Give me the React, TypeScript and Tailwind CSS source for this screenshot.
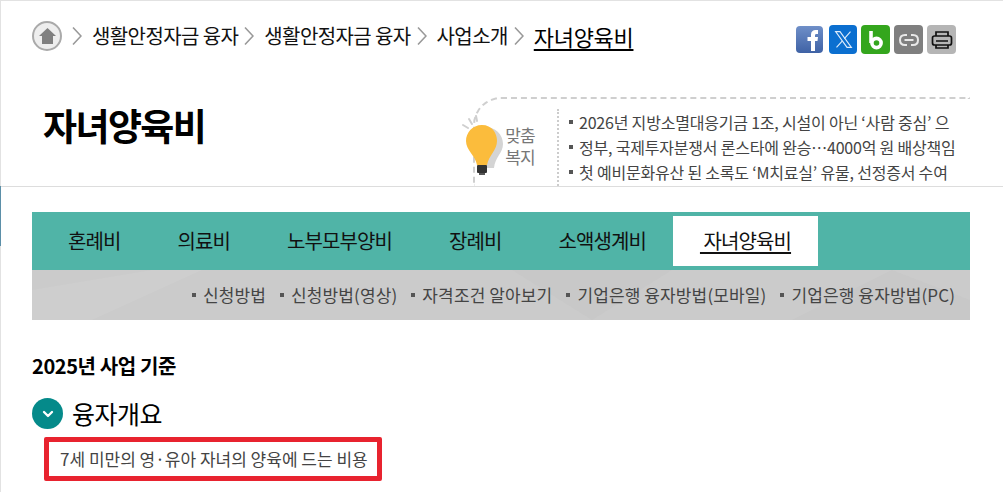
import { ChevronDown } from 'lucide-react';

const crumbs = ['생활안정자금 융자', '생활안정자금 융자', '사업소개'];
const news = [
  '2026년 지방소멸대응기금 1조, 시설이 아닌 ‘사람 중심’ 으',
  '정부, 국제투자분쟁서 론스타에 완승…4000억 원 배상책임',
  '첫 예비문화유산 된 소록도 ‘M치료실’ 유물, 선정증서 수여',
];
const tabs = ['혼례비', '의료비', '노부모부양비', '장례비', '소액생계비'];
const subs = ['신청방법', '신청방법(영상)', '자격조건 알아보기', '기업은행 융자방법(모바일)', '기업은행 융자방법(PC)'];

function Chevron() {
  return (
    <svg width="10" height="20" viewBox="0 0 10 20" fill="none" stroke="#999" strokeWidth="1.6" className="shrink-0 ml-[6px] mr-[10px]">
      <path d="M1 1.5 L9 10 L1 18.5" />
    </svg>
  );
}

function Bulb() {
  return (
    <svg width="46" height="62" viewBox="0 0 46 62" className="shrink-0">
      <g stroke="#cfcfcf" strokeWidth="2" strokeLinecap="round">
        <path d="M2 10 L7 13" />
        <path d="M8 4 L11 9" />
        <path d="M15 1 L16 6" />
      </g>
      <path d="M24 12 C34 12 42 19 42 29 C42 38 34 42 33 53 L24 53 Z" fill="#d4d4d4" />
      <path d="M21 10 C11 10 5 18 5 26 C5 35 14 40 16 50 L26 50 C28 40 36 35 36 26 C36 18 31 10 21 10 Z" fill="#fbbc3c" />
      <rect x="16" y="50" width="10" height="8" rx="1" fill="#333" />
      <rect x="18" y="58" width="6" height="2" fill="#555" />
    </svg>
  );
}

function ShareIcons() {
  return (
    <div className="flex items-center gap-[4px] mt-[4px]">
      <span className="w-[27px] h-[27px] mr-[2px] rounded-[4px] bg-gradient-to-b from-[#6f8fc8] to-[#3f62a5] flex items-center justify-center overflow-hidden">
        <svg width="27" height="27" viewBox="0 0 27 27">
          <path d="M15 25 V15 H11.5 V11 H15 V8.5 C15 5.5 17 4 19.5 4 H22 V8 H20.5 C19.3 8 19 8.6 19 9.6 V11 H22 L21.5 15 H19 V25 Z" fill="#fff" />
        </svg>
      </span>
      <span className="w-[28px] h-[29px] rounded-[4px] bg-[#0b6fd0] flex items-center justify-center">
        <svg width="21" height="21" viewBox="0 0 24 24" fill="none" stroke="#dcebfb" strokeWidth="1.3">
          <path d="M3 3 H8 L21 21 H16 Z" />
          <path d="M20 3 L13 11 M10.5 13.8 L4 21" />
        </svg>
      </span>
      <span className="w-[29px] h-[29px] rounded-[4px] bg-[#34a61d] flex items-center justify-center">
        <svg width="16" height="20" viewBox="0 0 16 20" fill="none" stroke="#fff" strokeWidth="3.6">
          <path d="M3 1 V13" />
          <circle cx="8.5" cy="13" r="4.6" />
        </svg>
      </span>
      <span className="w-[29px] h-[29px] rounded-[4px] bg-[#7f7f7f] flex items-center justify-center">
        <svg width="20" height="12" viewBox="0 0 20 12" fill="none" stroke="#e8e8e8" strokeWidth="2">
          <path d="M8 1 H6 C3 1 1 3 1 6 C1 9 3 11 6 11 H8" />
          <path d="M12 1 H14 C17 1 19 3 19 6 C19 9 17 11 14 11 H12" />
          <path d="M5.5 6 H14.5" />
        </svg>
      </span>
      <span className="w-[29px] h-[29px] rounded-[4px] bg-[#b5b5b5] flex items-center justify-center">
        <svg width="22" height="20" viewBox="0 0 22 20" fill="none" stroke="#111" strokeWidth="1.7">
          <path d="M5 6 V2 H17 V6" />
          <rect x="1.5" y="6" width="19" height="9" rx="2" />
          <path d="M5 11 H17 M5 15 V18 H17 V15" />
        </svg>
      </span>
    </div>
  );
}

export default function App() {
  return (
    <div
      className="w-[1003px] h-[492px] overflow-hidden bg-white border-t border-l border-[#e2e2e2] text-[#111]"
      style={{ fontFamily: '"Noto Sans CJK KR", "Noto Sans", sans-serif' }}
    >
      {/* Breadcrumb */}
      <div className="h-[96px] pl-[31px] pr-[47px] pt-[20px] flex items-start justify-between">
        <div className="flex items-center h-[30px] text-[20px] tracking-[-0.6px]">
          <span className="w-[30px] h-[30px] mr-[4px] rounded-full border-2 border-[#aaa] bg-[#eee] flex items-center justify-center">
            <svg width="19" height="18" viewBox="0 0 19 18">
              <path d="M9.5 1 L18 9 H15 V17 H4 V9 H1 Z" fill="#808080" />
            </svg>
          </span>
          <Chevron />
          {crumbs.map((c, i) => (
            <span key={i} className="flex items-center">
              <span>{c}</span>
              <Chevron />
            </span>
          ))}
          <span className="text-[22px] underline decoration-2 underline-offset-[3px] tracking-[-0.3px] text-black">자녀양육비</span>
        </div>
        <ShareIcons />
      </div>

      {/* Title + news */}
      <div className="h-[90px] border-b border-[#ddd] pl-[42px] pr-[33px] flex justify-between">
        <h1 className="text-[37px] leading-[56px] font-bold tracking-[-1.6px] text-black">자녀양육비</h1>
        <div className="w-[497px] h-[89px] border-t-2 border-l-2 border-dashed border-[#cfcfcf] rounded-tl-[28px] flex pt-[10px]">
          <div className="w-[82px] flex items-start pl-[4px] pt-[6px] -ml-[18px] shrink-0">
            <Bulb />
            <span className="text-[17px] leading-[22px] text-[#777] mt-[9px] -ml-[4px] w-[34px] text-center tracking-[-1px]">맞춤 복지</span>
          </div>
          <div className="h-full border-l-2 border-dotted border-[#ccc] ml-[18px] pl-[10px] overflow-hidden">
            {news.map((n) => (
              <div key={n} className="flex items-center h-[25px] text-[16px] text-[#444] whitespace-nowrap tracking-[-0.2px]">
                <span className="w-[4px] h-[4px] bg-[#555] mr-[6px] shrink-0" />
                {n}
              </div>
            ))}
          </div>
        </div>
      </div>

      {/* Tabs */}
      <div className="pt-[25px] pl-[31px] pr-[33px]">
        <div className="h-[58px] bg-[#50b4a7] flex pt-[4px] pl-[36px] text-[20px] tracking-[-0.9px]">
          <div className="flex items-center gap-[57px] h-[50px]">
            {tabs.map((t) => (
              <span key={t}>{t}</span>
            ))}
          </div>
          <span className="ml-[27px] w-[145px] h-[50px] bg-white flex items-center justify-center underline decoration-2 underline-offset-[3px] whitespace-pre">{' 자녀양육비'}</span>
        </div>
        <div className="relative h-[50px] bg-[#cbcbcb] flex items-center justify-end pr-[15px] gap-[14px] text-[17px] text-[#444] tracking-[0.12px] overflow-hidden">
          <svg className="absolute inset-0" width="938" height="50" viewBox="0 0 938 50">
            <path d="M0 20 L120 0 L170 0 L60 50 L0 50 Z" fill="#cecece" />
            <path d="M480 0 L560 50 L640 0 Z" fill="#c8c8c8" />
            <path d="M760 50 L860 0 L938 30 L938 50 Z" fill="#c8c8c8" />
          </svg>
          {subs.map((s) => (
            <span key={s} className="relative flex items-center whitespace-nowrap">
              <span className="w-[4px] h-[4px] bg-[#555] mr-[7px]" />
              {s}
            </span>
          ))}
        </div>

        {/* Content */}
        <h2 className="mt-[31px] text-[20px] leading-[30px] font-bold tracking-[-0.4px] text-black">2025년 사업 기준</h2>
        <div className="mt-[17px] flex items-center gap-[9px]">
          <span className="w-[31px] h-[31px] rounded-full bg-[#058a8a] flex items-center justify-center">
            <ChevronDown className="w-[16px] h-[16px] text-white" strokeWidth={3.5} />
          </span>
          <span className="text-[25px] leading-[31px] text-black tracking-[-0.5px]">융자개요</span>
        </div>
        <div className="ml-[12px] mt-[8px] w-[338px] h-[44px] border-[5px] border-[#e8232f] rounded-[2px] flex items-center pl-[11px] text-[17px] text-[#444] whitespace-nowrap">
          7세 미만의 영·유아 자녀의 양육에 드는 비용
        </div>
      </div>

      {/* Blue strip on the page edge */}
      <div className="fixed left-0 top-[186px] w-[1px] h-[60px] bg-[#5b8fa8]" />
    </div>
  );
}
